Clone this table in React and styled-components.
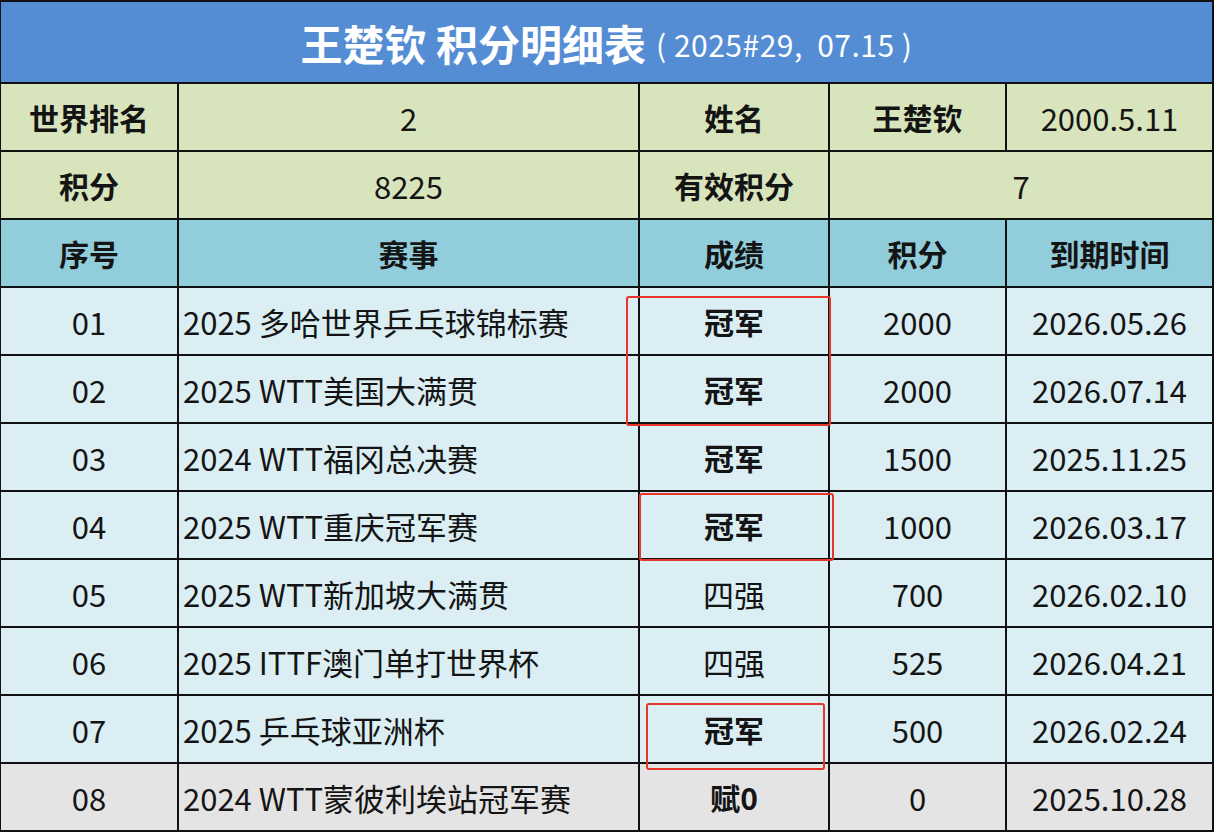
import React from 'react';
import styled, { createGlobalStyle } from 'styled-components';

const GlobalStyle = createGlobalStyle`
  html, body {
    margin: 0;
    padding: 0;
    background: #ffffff;
  }
  body {
    font-family: "Noto Sans CJK SC", "Noto Sans", sans-serif;
  }
`;

const Sheet = styled.div`
  position: relative;
  width: 1214px;
  height: 832px;
  box-sizing: border-box;
  padding: 2px 2px 0 1px;
  background: #111;
  display: grid;
  grid-template-columns: 176px 459px 188px 175px 1fr;
  grid-template-rows: 80px repeat(11, 66px);
  gap: 2px;
  overflow: hidden;
`;

const Title = styled.div`
  grid-column: 1 / -1;
  background: #548dd4;
  color: #fff;
  display: flex;
  align-items: center;
  justify-content: center;
  gap: 10px;
`;

const TitleMain = styled.span`
  font-size: 42px;
  font-weight: 700;
`;

const TitleSub = styled.span`
  font-size: 30px;
  font-weight: 400;
  margin-top: 4px;
  white-space: pre;
  letter-spacing: 0.5px;
`;

const bgs = {
  info: '#d8e4bc',
  head: '#92cddc',
  data: '#daeef3',
  void: '#e4e4e4',
};

const Cell = styled.div`
  background: ${(p) => bgs[p.$tone]};
  grid-column: ${(p) => (p.$span ? `span ${p.$span}` : 'auto')};
  display: flex;
  align-items: center;
  justify-content: ${(p) => (p.$left ? 'flex-start' : 'center')};
  padding: ${(p) => (p.$left ? '0 0 0 4px' : '0')};
  font-size: ${(p) => (p.$bold ? '30px' : '31px')};
  font-weight: ${(p) => (p.$bold ? 700 : 400)};
  color: #141414;
  white-space: nowrap;
`;

const Mark = styled.div`
  position: absolute;
  border: 2px solid #e8352a;
  border-radius: 3px;
  box-sizing: border-box;
  pointer-events: none;
`;

const rows = [
  ['01', '2025 多哈世界乒乓球锦标赛', '冠军', '2000', '2026.05.26'],
  ['02', '2025 WTT美国大满贯', '冠军', '2000', '2026.07.14'],
  ['03', '2024 WTT福冈总决赛', '冠军', '1500', '2025.11.25'],
  ['04', '2025 WTT重庆冠军赛', '冠军', '1000', '2026.03.17'],
  ['05', '2025 WTT新加坡大满贯', '四强', '700', '2026.02.10'],
  ['06', '2025 ITTF澳门单打世界杯', '四强', '525', '2026.04.21'],
  ['07', '2025 乒乓球亚洲杯', '冠军', '500', '2026.02.24'],
  ['08', '2024 WTT蒙彼利埃站冠军赛', '赋0', '0', '2025.10.28'],
];

const marks = [
  { left: 626, top: 296, width: 205, height: 130 },
  { left: 639, top: 493, width: 195, height: 68 },
  { left: 646, top: 703, width: 179, height: 67 },
];

export default function App() {
  return (
    <>
      <GlobalStyle />
      <Sheet>
        <Title>
          <TitleMain>王楚钦 积分明细表</TitleMain>
          <TitleSub>( 2025#29,  07.15 )</TitleSub>
        </Title>

        <Cell $tone="info" $bold>世界排名</Cell>
        <Cell $tone="info">2</Cell>
        <Cell $tone="info" $bold>姓名</Cell>
        <Cell $tone="info" $bold>王楚钦</Cell>
        <Cell $tone="info">2000.5.11</Cell>

        <Cell $tone="info" $bold>积分</Cell>
        <Cell $tone="info">8225</Cell>
        <Cell $tone="info" $bold>有效积分</Cell>
        <Cell $tone="info" $span={2}>7</Cell>

        {['序号', '赛事', '成绩', '积分', '到期时间'].map((h) => (
          <Cell key={h} $tone="head" $bold>{h}</Cell>
        ))}

        {rows.map((r, i) => {
          const tone = i === rows.length - 1 ? 'void' : 'data';
          const boldResult = r[2] !== '四强';
          return (
            <React.Fragment key={r[0]}>
              <Cell $tone={tone}>{r[0]}</Cell>
              <Cell $tone={tone} $left>{r[1]}</Cell>
              <Cell $tone={tone} $bold={boldResult}>{r[2]}</Cell>
              <Cell $tone={tone}>{r[3]}</Cell>
              <Cell $tone={tone}>{r[4]}</Cell>
            </React.Fragment>
          );
        })}

        {marks.map((m, i) => (
          <Mark key={i} style={m} />
        ))}
      </Sheet>
    </>
  );
}
